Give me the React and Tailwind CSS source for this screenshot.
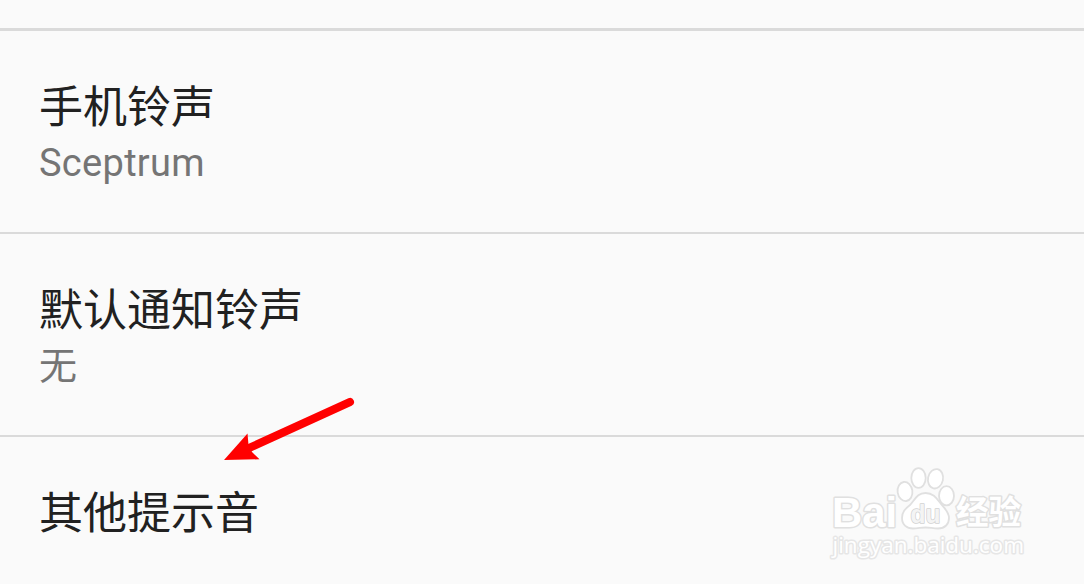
const settings = [
    { title: '手机铃声', summary: 'Sceptrum' },
    { title: '默认通知铃声', summary: '无' },
    { title: '其他提示音' }
];

function SettingRow({ title, summary }) {
    return (
        <div className="h-[203px] shrink-0 px-[39px] pt-[45px] border-b-2 border-[#dadada]">
            <p className="h-[62px] text-[44px] leading-[64px] text-[#212121]">{title}</p>
            {summary && <p className="text-[38px] leading-[51px] tracking-[0.3px] text-[#757575]">{summary}</p>}
        </div>
    );
}

function Arrow() {
    return (
        <svg className="absolute left-[210px] top-[385px]" width="160" height="90" viewBox="0 0 160 90">
            <path d="M140 17 L38 63.5" stroke="#ff0000" strokeWidth="8" strokeLinecap="round" />
            <path d="M14 75 L37.5 48.5 L38.5 60 L42 67 L49.5 74.3 Z" fill="#ff0000" />
        </svg>
    );
}

function Watermark() {
    return (
        <svg
            className="absolute left-[820px] top-[460px]"
            width="220"
            height="110"
            viewBox="0 0 220 110"
            fill="#ffffff"
            stroke="#e0e0e0"
            strokeWidth="3"
            strokeLinejoin="round"
            paintOrder="stroke"
        >
            <text x="12" y="67" fontFamily="Liberation Sans" fontWeight="700" fontSize="43" textLength="65" lengthAdjust="spacingAndGlyphs">Bai</text>

            {/* Paw */}
            <g strokeWidth="1.8" paintOrder="normal">
                <ellipse cx="85" cy="31.5" rx="7.4" ry="9.6" transform="rotate(-8 85 31.5)" />
                <ellipse cx="98.5" cy="18" rx="7.2" ry="9.8" />
                <ellipse cx="115.5" cy="18.8" rx="7.5" ry="9.8" transform="rotate(12 115.5 18.8)" />
                <ellipse cx="126.5" cy="35.8" rx="7.5" ry="9.6" />
                <path d="M105.5 33 C97 33 95 40 90 45 C85 49 82 52 82 58 C82 65 87 68.5 93 68.5 C98 68.5 101 67.5 105.5 67.5 C110 67.5 113 68.5 118 68.5 C125 68.5 129 64 129 58 C129 52 125 49 121 44 C117 39 114 33 105.5 33 Z" />
            </g>
            <text x="90.5" y="62.5" fontFamily="Liberation Sans" fontWeight="700" fontSize="26.5" textLength="30" lengthAdjust="spacingAndGlyphs" strokeWidth="1.6" stroke="#d2d2d2" fill="#f4f4f4">du</text>

            <text x="136" y="64" fontFamily="Noto Sans CJK SC" fontWeight="700" fontSize="32.5" textLength="65">经验</text>
            <text x="12.5" y="93" fontFamily="Open Sans" fontWeight="400" fontSize="22" textLength="191.5" lengthAdjust="spacingAndGlyphs" stroke="#e6e6e6">jingyan.baidu.com</text>
        </svg>
    );
}

export default function App() {
    return (
        <div className="relative flex flex-col w-[1084px] h-[584px] overflow-hidden bg-[#fafafa] font-['Roboto','Noto_Sans_CJK_SC',sans-serif]">
            <div className="h-[31px] shrink-0 border-b-3 border-[#dadada]" />
            {settings.map((item) => (
                <SettingRow key={item.title} {...item} />
            ))}
            <Arrow />
            <Watermark />
        </div>
    );
}
